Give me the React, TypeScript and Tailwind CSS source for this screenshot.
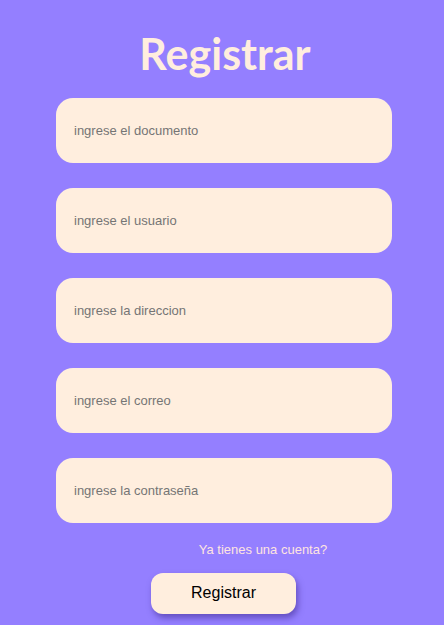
export default function App() {
  const fields = [
    'ingrese el documento',
    'ingrese el usuario',
    'ingrese la direccion',
    'ingrese el correo',
    'ingrese la contraseña',
  ];

  return (
    <div className="min-h-screen bg-[#947fff] flex flex-col items-center font-['Liberation_Sans',Arial,sans-serif]">
      <h1 className="mt-[27px] ml-[6px] text-[43px] leading-[53px] font-bold text-[#ffeede] font-['Lato',sans-serif]">
        Registrar
      </h1>

      <form className="mt-[18px] ml-[4px] flex flex-col gap-[25px] w-[336px]" onSubmit={e => e.preventDefault()}>
        {fields.map(f => (
          <input
            key={f}
            type="text"
            placeholder={f}
            className="h-[65px] w-full rounded-[17px] bg-[#ffeede] px-[18px] text-[13px] text-gray-800 placeholder:text-[#757575] outline-none"
          />
        ))}
      </form>

      <a href="#" className="mt-[17px] ml-[82px] text-[13px] text-[#ffe4e1]">
        Ya tienes una cuenta?
      </a>

      <button className="mt-[13px] ml-[3px] w-[145px] h-[41px] rounded-[12px] bg-[#ffeede] text-[16px] text-black shadow-[2px_4px_6px_rgba(60,40,140,0.55)]">
        Registrar
      </button>
    </div>
  );
}
